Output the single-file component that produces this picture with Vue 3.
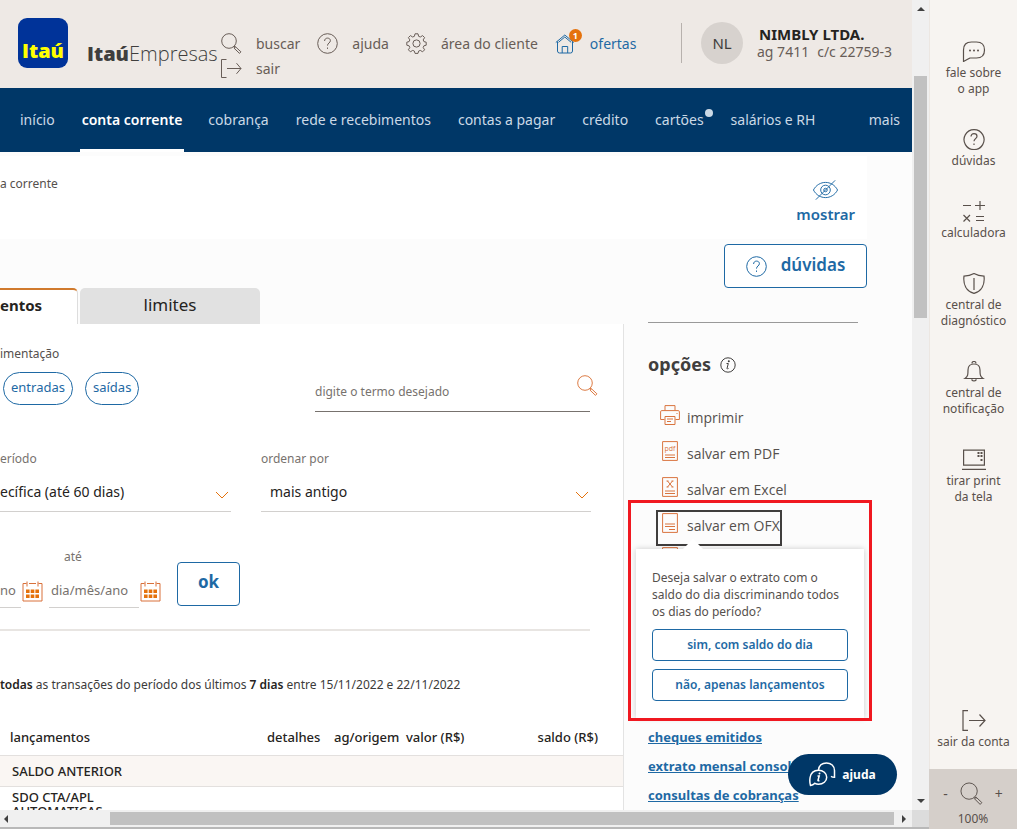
<script setup>
import { ref } from 'vue'

const tabs = ['início', 'conta corrente', 'cobrança', 'rede e recebimentos', 'contas a pagar', 'crédito', 'cartões', 'salários e RH']
const current = ref('conta corrente')
const term = ref('')
const order = ref('mais antigo')
const period = ref('ecífica (até 60 dias)')

const tools = [
  { icon: 'chat', lines: ['fale sobre', 'o app'] },
  { icon: 'help', lines: ['dúvidas'] },
  { icon: 'calc', lines: ['calculadora'] },
  { icon: 'shield', lines: ['central de', 'diagnóstico'] },
  { icon: 'bell', lines: ['central de', 'notificação'] },
  { icon: 'print', lines: ['tirar print', 'da tela'] }
]
const links = ['cheques emitidos', 'extrato mensal consolidado', 'consultas de cobranças']
</script>

<template>
  <div class="shell">
    <div class="viewport">
      <header class="top">
        <a class="logo" href="#">Itaú</a>
        <div class="brand"><b>Itaú</b>Empresas</div>
        <ul class="menu">
          <li>
            <a href="#">
              <svg class="ic" viewBox="0 0 21 21"><circle cx="8" cy="8" r="7.3" /><path d="M13 13l1.5 1.5M14.3 13.6l5.6 5.2-1.4 1.6-5.6-5.4z" /></svg>
              <span>buscar</span>
            </a>
          </li>
          <li>
            <a href="#">
              <svg class="ic" viewBox="0 0 21 21"><circle cx="10.500" cy="10.500" r="9.800" /><path d="M7.600 8c0-1.800 1.200-2.900 2.900-2.900s2.900 1 2.900 2.600c0 2.100-2.900 2.400-2.900 4.900M10.500 14.500v1.400" /></svg>
              <span>ajuda</span>
            </a>
          </li>
          <li>
            <a href="#">
              <svg class="ic" viewBox="0 0 21 21"><circle cx="10.500" cy="10.500" r="3.600" /><path d="M9 .8h3l.6 2.500 1.700.7 2.300-1.400 2 2-1.400 2.300.7 1.700 2.300.6v3l-2.300.6-.7 1.700 1.400 2.300-2 2-2.300-1.400-1.700.7-.6 2.300H9l-.6-2.300-1.700-.7-2.300 1.400-2-2 1.400-2.300-.7-1.700-2.300-.6v-3l2.300-.6.7-1.700-1.400-2.300 2-2L6.700 4l1.700-.7z" /></svg>
              <span>área do cliente</span>
            </a>
          </li>
          <li>
            <a class="offers" href="#">
              <svg class="ic" viewBox="0 0 21 21"><path d="M.8 9.500L9.800 2l9 7.500M2.500 8.500V18q0 2 2 2h11q2 0 2-2V8.500M3.500 9.300L9.800 4l6.300 5.300M7.200 20v-6.500h5.500V20" /></svg>
              <span>ofertas</span>
              <span class="badge">1</span>
            </a>
          </li>
          <li>
            <a href="#">
              <svg class="ic" viewBox="0 0 21 21"><path d="M5.500 1.500h-5v18h5M6 10.500h14M15.500 5.200l4.500 5.300-4.500 5.300" /></svg>
              <span>sair</span>
            </a>
          </li>
        </ul>
        <div class="account">
          <div class="avatar">NL</div>
          <div class="who">
            <strong>NIMBLY LTDA.</strong>
            <span class="agency"><span>ag 7411</span><span>c/c 22759-3</span></span>
          </div>
        </div>
      </header>

      <nav class="nav">
        <a v-for="t in tabs" :key="t" href="#" :class="{ on: t === current, dot: t === 'cartões' }" @click.prevent="current = t">{{ t }}</a>
        <a class="more" href="#">mais
          <svg viewBox="0 0 12 8"><path d="M1 1l5 5 5-5" /></svg>
        </a>
      </nav>

      <main>
        <section class="crumbs">
          <span>a corrente</span>
          <button class="show">
            <svg viewBox="0 0 28 22"><path d="M1.500 11C7 .5 21 .5 26.500 11 21 21.500 7 21.500 1.500 11zM4 21L24 1" /><circle cx="14" cy="11" r="5" /><circle cx="14" cy="11" r="1.800" /></svg>
            mostrar
          </button>
        </section>
        <div class="doubts">
          <button>
            <svg class="ic" viewBox="0 0 21 21"><circle cx="10.500" cy="10.500" r="9.800" /><path d="M7.600 8c0-1.800 1.200-2.900 2.900-2.900s2.900 1 2.900 2.600c0 2.100-2.900 2.400-2.900 4.900M10.500 14.500v1.400" /></svg>
            <span>dúvidas</span>
          </button>
        </div>

        <div class="cols">
          <div class="left">
            <div class="tabs">
              <button class="tab active">entos</button>
              <button class="tab">limites</button>
            </div>
            <section class="sheet">
              <div class="filters">
                <div>
                  <p class="lbl dark">imentação</p>
                  <div class="pills"><button>entradas</button><button>saídas</button></div>
                </div>
                <label class="search">
                  <input v-model="term" type="text" placeholder="digite o termo desejado" aria-label="digite o termo desejado" />
                  <svg viewBox="0 0 21 21"><circle cx="8" cy="8" r="7.300" /><path d="M13 13l1.500 1.500M14.300 13.600l5.600 5.200-1.400 1.600-5.600-5.400z" /></svg>
                </label>
              </div>

              <div class="selects">
                <label class="field">
                  <span class="lbl">eríodo</span>
                  <select v-model="period"><option>ecífica (até 60 dias)</option></select>
                  <svg viewBox="0 0 14 8"><path d="M1 1l6 6 6-6" /></svg>
                </label>
                <label class="field indent">
                  <span class="lbl">ordenar por</span>
                  <select v-model="order"><option>mais antigo</option><option>mais recente</option></select>
                  <svg viewBox="0 0 14 8"><path d="M1 1l6 6 6-6" /></svg>
                </label>
              </div>

              <div class="dates">
                <label class="date from"><input type="text" placeholder="no" aria-label="data inicial" /></label>
                <svg class="cal" viewBox="0 0 21 21"><path d="M1 2.500h3.500M7 2.500h7M16.500 2.500H20V20H1V2.500M5 .5v5M16 .5v5" /><path class="fill" d="M4 8.500h3.600v3.600H4zM8.700 8.500h3.600v3.600H8.700zM13.400 8.500H17v3.600h-3.600zM4 13.500h3.600v3.600H4zM8.700 13.500h3.600v3.600H8.700zM13.400 13.500H17v3.600h-3.600z" /></svg>
                <label class="date to"><span class="lbl">até</span><input type="text" placeholder="dia/mês/ano" /></label>
                <svg class="cal" viewBox="0 0 21 21"><path d="M1 2.500h3.500M7 2.500h7M16.500 2.500H20V20H1V2.500M5 .5v5M16 .5v5" /><path class="fill" d="M4 8.500h3.600v3.600H4zM8.700 8.500h3.600v3.600H8.700zM13.400 8.500H17v3.600h-3.600zM4 13.500h3.600v3.600H4zM8.700 13.500h3.600v3.600H8.700zM13.400 13.500H17v3.600h-3.600z" /></svg>
                <button class="ok">ok</button>
              </div>

              <p class="summary"><b>todas</b> as transações do período dos últimos <b>7 dias</b> entre 15/11/2022 e 22/11/2022</p>

              <table>
                <colgroup><col /><col class="c2" /><col class="c3" /><col class="c4" /><col class="c5" /></colgroup>
                <thead>
                  <tr><th>lançamentos</th><th>detalhes</th><th>ag/origem</th><th>valor (R$)</th><th class="num">saldo (R$)</th></tr>
                </thead>
                <tbody>
                  <tr class="shade"><td>SALDO ANTERIOR</td><td></td><td></td><td></td><td></td></tr>
                  <tr><td>SDO CTA/APL<br />AUTOMATICAS</td><td></td><td></td><td></td><td></td></tr>
                </tbody>
              </table>
            </section>
          </div>

          <aside class="options">
            <h2>opções
              <svg viewBox="0 0 16 16"><circle cx="8" cy="8" r="7.200" /><path d="M6.500 6.500h1.800L7 11.500q0 .8 1.500 0" /><circle class="pt" cx="8.800" cy="4.300" r="1" /></svg>
            </h2>
            <ul class="actions">
              <li><button>
                <svg viewBox="0 0 20 20"><path d="M5 5.500V.6h10v4.900M4.500 14.500H.6V6.800q0-1.200 1.200-1.200h16.400q1.200 0 1.200 1.200v7.700h-3.900M5 11.500h10v8H5zM7 14h6M7 16.500h4M16.500 8.500h1" /></svg>
                imprimir</button></li>
              <li><button>
                <svg viewBox="0 0 20 20"><path d="M2.600.6h14.800v18.800H2.600zM5 14h10M5 16.500h10" /><text x="10" y="9.500">pdf</text></svg>
                salvar em PDF</button></li>
              <li><button>
                <svg viewBox="0 0 20 20"><path d="M2.600.6h14.800v18.800H2.600zM5 14h10M5 16.500h10M7.500 4l5 6M12.500 4l-5 6M6.500 4h2M11.500 4h2M6.500 10h2M11.500 10h2" /></svg>
                salvar em Excel</button></li>
              <li><button class="focus">
                <svg viewBox="0 0 20 20"><path d="M2.600.6h14.800v18.800H2.600zM5 11h10M5 13.500h10M9 16.500h6" /></svg>
                salvar em OFX</button>
                <div class="mark"></div>
                <div class="pop" role="dialog">
                  <p>Deseja salvar o extrato com o saldo do dia discriminando todos os dias do período?</p>
                  <button>sim, com saldo do dia</button>
                  <button>não, apenas lançamentos</button>
                </div>
              </li>
              <li class="last"><button aria-label="salvar">
                <svg viewBox="0 0 20 20"><path d="M2.600.6h14.800v18.800H2.600z" /></svg></button></li>
            </ul>
            <ul class="links"><li v-for="l in links" :key="l"><a href="#">{{ l }}</a></li></ul>
          </aside>
        </div>
      </main>

      <button class="chat">
        <svg viewBox="0 0 27 25"><path d="M9.500 8C10 3.500 13 1 17.500 1 22 1 25.500 4 25.500 8.500v6.800c-1.500 0-2.500-.3-3.500-1" /><path d="M1.500 23.500c-.8-2.500-.9-5-.4-8C1.800 11 5 8.200 9.500 8.200c4.700 0 8.200 3 8.200 7s-3.500 7-8.200 7c-1.300 0-2.600-.3-3.600-.9-1.300 1.300-2.700 2-4.400 2.200z" /><path d="M8.500 14h1.700l-1.300 4.500q.1.700 1.500 0" /><circle class="pt" cx="10.500" cy="11.500" r="1" /></svg>
        ajuda
      </button>
    </div>

    <div class="vbar"><i class="up"></i><i class="vthumb"></i><i class="down"></i></div>
    <div class="hbar"><i class="lt"></i><i class="hthumb"></i><i class="rt"></i></div>
    <div class="corner"></div>

    <aside class="side">
      <button v-for="t in tools" :key="t.icon">
        <svg viewBox="0 0 24 21">
          <template v-if="t.icon === 'chat'"><path d="M1.500 20.500V9q0-8 8-8h5q8 0 8 8t-8 8H8q-2.500 1.500-6.500 3.500z" /><circle class="pt" cx="8" cy="9.500" r="1" /><circle class="pt" cx="12" cy="9.500" r="1" /><circle class="pt" cx="16" cy="9.500" r="1" /></template>
          <path v-else-if="t.icon === 'help'" d="M12 .6a10 10 0 1 0 .1 0zM9 7.500c0-1.800 1.300-2.900 3-2.900s3 1 3 2.600c0 2.200-3 2.600-3 5M12 14.500v1.500" />
          <path v-else-if="t.icon === 'calc'" d="M1 4.500h8M13 4.500h10M18 0v9M1.500 14l6.500 6.500M8 14l-6.500 6.500M14 15.500h8M14 19.500h8" />
          <path v-else-if="t.icon === 'shield'" d="M12 .6c3.500 2 6.500 2.500 10 2.500 1 8-2 15-10 17.300C4 18.100 1 11.100 2 3.100 5.500 3.100 8.500 2.600 12 .6zM12 5v12" />
          <path v-else-if="t.icon === 'bell'" d="M10 2.500Q10 .5 12 .5t2 2M3 17.500c3-2 3-4 3-8.500 0-4 2.500-6 6-6s6 2 6 6c0 4.500 0 6.500 3 8.500zM9.500 18.500q2.500 3 5 0" />
          <template v-else><path d="M1.600 1.100h20.800v15H1.600zM0 20.400h24" /><path class="pt" d="M15.500 3h2v2h-2zM18.500 3h2v2h-2zM15.500 6h2v2h-2zM18.500 6h2v2h-2zM18.500 10h2v2h-2z" /></template>
        </svg>
        <span v-for="l in t.lines" :key="l">{{ l }}</span>
      </button>
      <button class="leave">
        <svg viewBox="0 0 24 21"><path d="M6 .6H1v19.800h5M7 10.500h16M17.500 4.500l5.500 6-5.500 6" /></svg>
        <span>sair da conta</span>
      </button>
      <div class="zoom">
        <div class="zrow">
          <button aria-label="diminuir">-</button>
          <svg viewBox="0 0 24 24"><circle cx="9.500" cy="9.500" r="8.500" /><path d="M15 15.500l2 2M16.800 15.800l6 5.700-1.800 1.900-6-6z" /></svg>
          <button aria-label="aumentar">+</button>
        </div>
        <span>100%</span>
      </div>
    </aside>
  </div>
</template>

<style>
body { margin: 0; overflow: hidden; }
</style>

<style scoped>
.shell { display: grid; grid-template: minmax(0, 1fr) 19px / minmax(0, 1fr) 17px 88px; height: 100vh; font-family: "Noto Sans", "Open Sans", sans-serif; font-size: 14px; color: #3c3b3a; background: #fcfcfc; }
* { box-sizing: border-box; }
button, input, select { font: inherit; color: inherit; background: none; border: 0; padding: 0; margin: 0; outline: 0; }
button { cursor: pointer; white-space: nowrap; }
a { color: inherit; text-decoration: none; }
ul { list-style: none; margin: 0; padding: 0; }
p { margin: 0; }
svg { fill: none; stroke: currentColor; stroke-width: 1; flex: none; display: block; }
.pt { fill: currentColor; stroke: none; }
.ic { width: 21px; height: 21px; }
.viewport { position: relative; overflow: hidden; }

.top { display: flex; height: 88px; background: #eee9e5; padding: 18px 20px 0 18px; color: #685d57; }
.logo { display: flex; align-items: flex-end; justify-content: center; width: 50px; height: 50px; border-radius: 9px; background: #039; color: #ff0; font-family: "Open Sans", sans-serif; font-size: 20px; line-height: 34px; font-weight: 800; }
.brand { width: 134px; margin: 18px 0 0 19px; font-family: "Open Sans", sans-serif; font-size: 20px; line-height: 36px; font-weight: 300; color: #403e3d; white-space: nowrap; }
.brand b { font-weight: 800; }
.menu { flex: 1; display: flex; flex-wrap: wrap; align-content: flex-start; column-gap: 17px; margin-top: 13px; }
.menu a { position: relative; display: flex; align-items: center; gap: 14px; height: 25px; font-size: 14px; white-space: nowrap; }
.menu .offers { color: #1e69a4; }
.badge { position: absolute; left: 14px; top: -2px; width: 13px; height: 13px; border-radius: 50%; background: #e5720c; color: #fff; font-size: 9px; line-height: 13px; font-weight: 700; text-align: center; }
.account { display: flex; height: 40px; margin-top: 5px; padding-left: 19px; border-left: 1px solid #b7b1ad; align-items: center; }
.avatar { width: 42px; height: 42px; border-radius: 50%; background: #d7d2ce; color: #403e3d; font-size: 15px; line-height: 42px; text-align: center; }
.who { padding-left: 14px; display: flex; flex-direction: column; line-height: 17px; white-space: nowrap; }
.who strong { font-size: 15px; color: #252321; padding-left: 2px; }
.agency { display: flex; gap: 8px; font-size: 14px; }

.nav { display: flex; gap: 27px; height: 64px; padding: 0 0 0 20px; background: #003767; color: #cbd9e6; font-size: 14px; line-height: 64px; white-space: nowrap; }
.nav a { position: relative; }
.nav .on { color: #fff; font-weight: 600; padding: 0 2px; margin: 0 -3px 0 -2px; border-bottom: 3px solid #fff; }
.nav .dot::after { content: ""; position: absolute; right: -9px; top: 21px; width: 8px; height: 8px; border-radius: 50%; background: #cbd9e6; }
.nav .more { display: flex; align-items: center; gap: 11px; margin: 0 -11px 0 auto; }
.more svg { width: 12px; height: 8px; }

.crumbs { display: flex; justify-content: space-between; height: 83px; margin: 4px 45px 0 0; padding: 16px 12px 0 0; background: #fff; line-height: 22px; font-size: 14px; }
.crumbs span { color: #55504d; font-size: 12px; line-height: 24px; }
.show { display: flex; flex-direction: column; align-items: center; align-self: flex-start; margin-top: 7px; color: #1e69a4; font-size: 15px; font-weight: 600; line-height: 27px; }
.show svg { width: 27px; height: 22px; }
.doubts { display: flex; justify-content: flex-end; padding: 5px 45px 0 0; height: 49px; }
.doubts button { display: flex; align-items: center; justify-content: center; gap: 14px; width: 143px; height: 44px; border: 1px solid #1e69a4; border-radius: 4px; background: #fff; color: #1e69a4; font-size: 17px; font-weight: 600; }
.doubts span { padding-bottom: 3px; }

.cols { display: grid; grid-template-columns: minmax(0, 1fr) 288px; }
.tabs { display: flex; gap: 2px; }
.tab { width: 180px; height: 36px; padding-bottom: 4px; border-radius: 5px 5px 0 0; background: #e1e1e1; color: #252321; font-size: 17px; }
.tab.active { width: 78px; padding: 0 30px 4px 0; text-align: left; border-top: 2px solid #d07a2d; border-right: 1px solid #ddd; border-radius: 0 5px 0 0; background: #fff; font-size: 15px; font-weight: 700; }
.sheet { background: #fff; border-right: 1px solid #e3e3e3; padding-top: 18px; min-height: 520px; }
.lbl { display: block; font-size: 12px; line-height: 24px; color: #77726e; }
.dark { color: #55504d; }
.filters, .selects { display: flex; justify-content: space-between; margin-right: 33px; }
.pills { display: flex; gap: 12px; padding: 6px 0 0 3px; }
.pills button { height: 33px; padding: 0 7px 3px; border: 1px solid #1e69a4; border-radius: 17px; color: #1e69a4; font-size: 13px; }
.search { position: relative; width: 275px; padding-top: 29px; }
.search input { width: 100%; height: 41px; border-bottom: 1px solid #77726e; font-size: 12px; }
.search svg { position: absolute; right: -8px; top: 33px; width: 21px; height: 21px; color: #dd7c45; }
input::placeholder { color: #77726e; opacity: 1; }
.selects { gap: 30px; padding-top: 35px; margin-right: 32px; }
.field { position: relative; flex: 1; }
.field.indent { flex: none; width: 330px; }
.field select { appearance: none; width: 100%; height: 41px; border-bottom: 1px solid #d2d0ce; color: #252321; font-size: 14px; }
.indent select { padding-left: 9px; }
.field svg { position: absolute; right: 2px; bottom: 13px; width: 14px; height: 8px; color: #e5720c; }
.dates { display: flex; align-items: flex-end; height: 119px; margin-right: 33px; padding-bottom: 21px; border-bottom: 2px solid #e8e5e2; }
.date input { display: block; width: 100%; height: 36px; border-bottom: 1px solid #d2d0ce; font-size: 13px; }
.date.from { width: 21px; }
.date.to { width: 90px; margin-left: 5px; }
.date.to .lbl { padding-left: 15px; margin-bottom: 3px; }
.date.to input { padding-left: 2px; }
.cal { width: 21px; height: 21px; margin: 0 1px 6px; color: #d9713a; }
.cal .fill { fill: #e5720c; stroke: none; }
.ok { width: 63px; height: 44px; margin: 0 0 2px 15px; padding-bottom: 5px; border: 1px solid #1e69a4; border-radius: 4px; color: #1e69a4; font-size: 17px; font-weight: 700; }
.summary { padding: 42px 0 30px; font-size: 12px; line-height: 24px; color: #3c3b3a; white-space: nowrap; }
.summary b { color: #252321; font-weight: 600; }
table { width: 100%; border-collapse: collapse; table-layout: fixed; color: #252321; }
.c2 { width: 67px; } .c3 { width: 72px; } .c4 { width: 84px; } .c5 { width: 133px; }
th { padding: 0 0 8px; font-size: 13px; line-height: 20px; font-weight: 500; text-align: left; white-space: nowrap; }
th:first-child { padding-left: 10px; }
th.num { text-align: right; padding-right: 25px; }
td { padding: 3px 0 4px; border-top: 1px solid #e3e0de; font-size: 13px; line-height: 14px; vertical-align: top; font-weight: 500; }
.shade td { background: #faf6f3; padding: 5px 0 4px; line-height: 21px; }
tr td:first-child { padding-left: 12px; }

.options { padding: 34px 0 0 24px; background: #fcfcfc; }
.options h2 { display: flex; align-items: center; gap: 9px; margin: 0 54px 0 0; padding: 28px 0 24px; border-top: 1px solid #999; font-size: 18px; line-height: 27px; font-weight: 700; color: #403e3d; }
.options h2 svg { width: 16px; height: 16px; }
.actions { padding-left: 8px; }
.actions li { position: relative; height: 36px; }
.actions li > button { display: flex; align-items: flex-start; gap: 7px; height: 36px; padding: 1px 0 0 2px; border: 2px solid transparent; line-height: 26px; font-family: "Open Sans", sans-serif; font-size: 14px; color: #55504d; }
.actions svg { width: 20px; height: 20px; color: #d9743f; }
.actions text { fill: currentColor; stroke: none; font-size: 7px; text-anchor: middle; }
.actions li > .focus { border-color: #403e3d; }
.actions .last button { border-top-width: 0; }
.mark { position: absolute; z-index: 3; left: -28px; top: -10px; width: 244px; height: 221px; border: 3px solid #f01820; pointer-events: none; }
.pop { position: absolute; z-index: 2; left: -20px; top: 39px; width: 228px; padding: 20px 16px 17px; background: #fff; box-shadow: 0 0 6px rgba(0, 0, 0, .2); font-size: 12px; line-height: 17px; color: #55504d; }
.pop::before { content: ""; position: absolute; left: 47px; top: -10px; border: solid transparent; border-width: 0 10px 10px; border-bottom-color: #fff; }
.pop p { padding-bottom: 1px; }
.pop button { display: block; width: 100%; height: 32px; margin-top: 8px; padding-bottom: 2px; border: 1px solid #1e69a4; border-radius: 4px; color: #1e69a4; font-size: 12px; font-weight: 600; }
.links { margin-top: 141px; font-size: 13px; line-height: 29px; font-weight: 700; color: #1e69a4; white-space: nowrap; }
.links a { text-decoration: underline; }

.chat { position: absolute; z-index: 4; right: 15px; bottom: 15px; display: flex; align-items: center; justify-content: center; gap: 6px; width: 109px; height: 41px; border-radius: 21px; background: #003767; color: #fff; font-size: 12px; font-weight: 700; }
.chat svg { width: 27px; height: 25px; stroke-width: 1.5; }

.vbar, .hbar { display: flex; align-items: center; background: #f0f0f0; }
.vbar { flex-direction: column; }
.vthumb { width: 13px; height: 242px; margin: 65px 0 auto; background: #c1c1c1; }
.up, .down, .lt, .rt { border: 4px solid transparent; width: 0; height: 0; }
.up { border-bottom-color: #404040; margin-top: 3px; }
.down { border-top-color: #404040; margin-bottom: 3px; }
.hbar { grid-area: 2 / 1; border-bottom: 2px solid #b8b8b8; }
.lt { border-right-color: #404040; }
.rt { border-left-color: #404040; margin: 0 2px 0 8px; }
.hthumb { flex: 1; height: 13px; margin-left: 102px; background: #c1c1c1; }
.corner { grid-area: 2 / 2; background: #dcdcdc; border-bottom: 2px solid #b8b8b8; }

.side { grid-area: 1 / 3 / 3 / 4; display: flex; flex-direction: column; gap: 32px; padding-top: 41px; border-left: 1px solid #ece7e2; background: #f7f4f1; color: #59504b; font-size: 12px; line-height: 16px; }
.side > button { display: flex; flex-direction: column; align-items: center; }
.side > button svg { width: 24px; height: 21px; margin-bottom: 3px; stroke-width: 1.2; }
.side > .leave { margin-top: auto; margin-bottom: -13px; }
.zoom { display: flex; flex-direction: column; align-items: center; height: 60px; padding-top: 11px; margin-left: -1px; background: #d5cfca; }
.zrow { display: flex; align-items: center; gap: 12px; height: 27px; font-size: 14px; }
.zrow svg { width: 23px; height: 23px; }
.zoom > span { margin-top: 4px; }
</style>
